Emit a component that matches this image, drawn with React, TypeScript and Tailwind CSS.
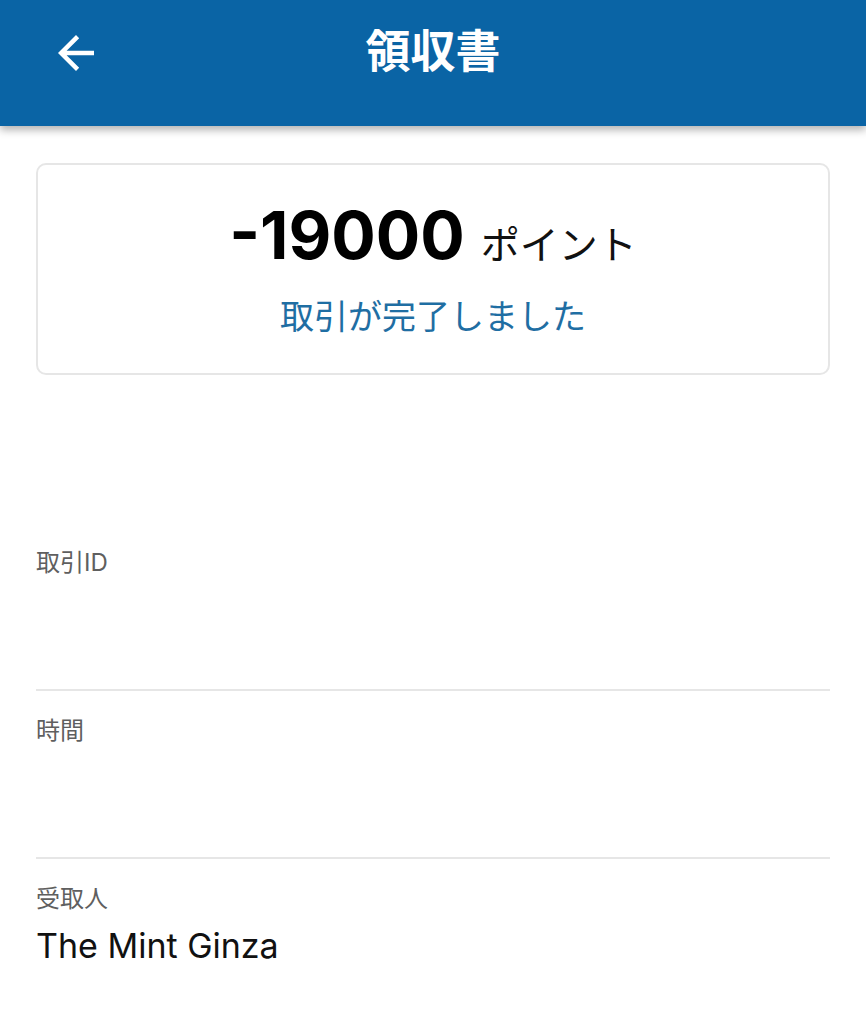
const font = "font-['Inter','Noto_Sans_CJK_JP',sans-serif]";

const BackIcon = () => (
  <svg viewBox="0 0 24 24" className="h-[54px] w-[54px] fill-white">
    <path d="M20 11H7.83l5.59-5.59L12 4l-8 8 8 8 1.41-1.41L7.83 13H20v-2z" />
  </svg>
);

const Row = ({ label, value, last }: { label: string; value?: string; last?: boolean }) => (
  <div className={`flex flex-col pt-[22px] ${last ? '' : 'h-[168px] border-b-2 border-[#e6e6e6]'}`}>
    <p className="text-[24px] leading-[36px] text-[#5f5f5f]">{label}</p>
    <p className="mt-[4px] min-h-[50px] text-[34px] leading-[50px] text-[#111]">{value}</p>
  </div>
);

export default function App() {
  return (
    <div className={`min-h-[1024px] w-full bg-white ${font}`}>
      <header className="relative flex h-[126px] items-start justify-center bg-[#0a64a5] shadow-[0_4px_8px_rgba(0,0,0,0.3)]">
        <button className="absolute left-[49px] top-[26px]">
          <BackIcon />
        </button>
        <h1 className="mt-[24px] text-[45px] font-bold leading-[56px] text-white">領収書</h1>
      </header>

      <main className="px-[36px] pt-[37px]">
        <div className="flex h-[212px] flex-col items-center rounded-[10px] border-2 border-[#e6e6e6] pt-[30px]">
          <div className="flex items-baseline gap-[16px]">
            <span className="text-[66px] font-bold leading-[80px] text-black">-19000</span>
            <span className="text-[39px] leading-[48px] text-[#111]">ポイント</span>
          </div>
          <p className="mt-[18px] text-[34px] leading-[48px] text-[#1f6ea3]">取引が完了しました</p>
        </div>

        <div className="mt-[148px]">
          <Row label="取引ID" />
          <Row label="時間" />
          <Row label="受取人" value="The Mint Ginza" last />
        </div>
      </main>
    </div>
  );
}
